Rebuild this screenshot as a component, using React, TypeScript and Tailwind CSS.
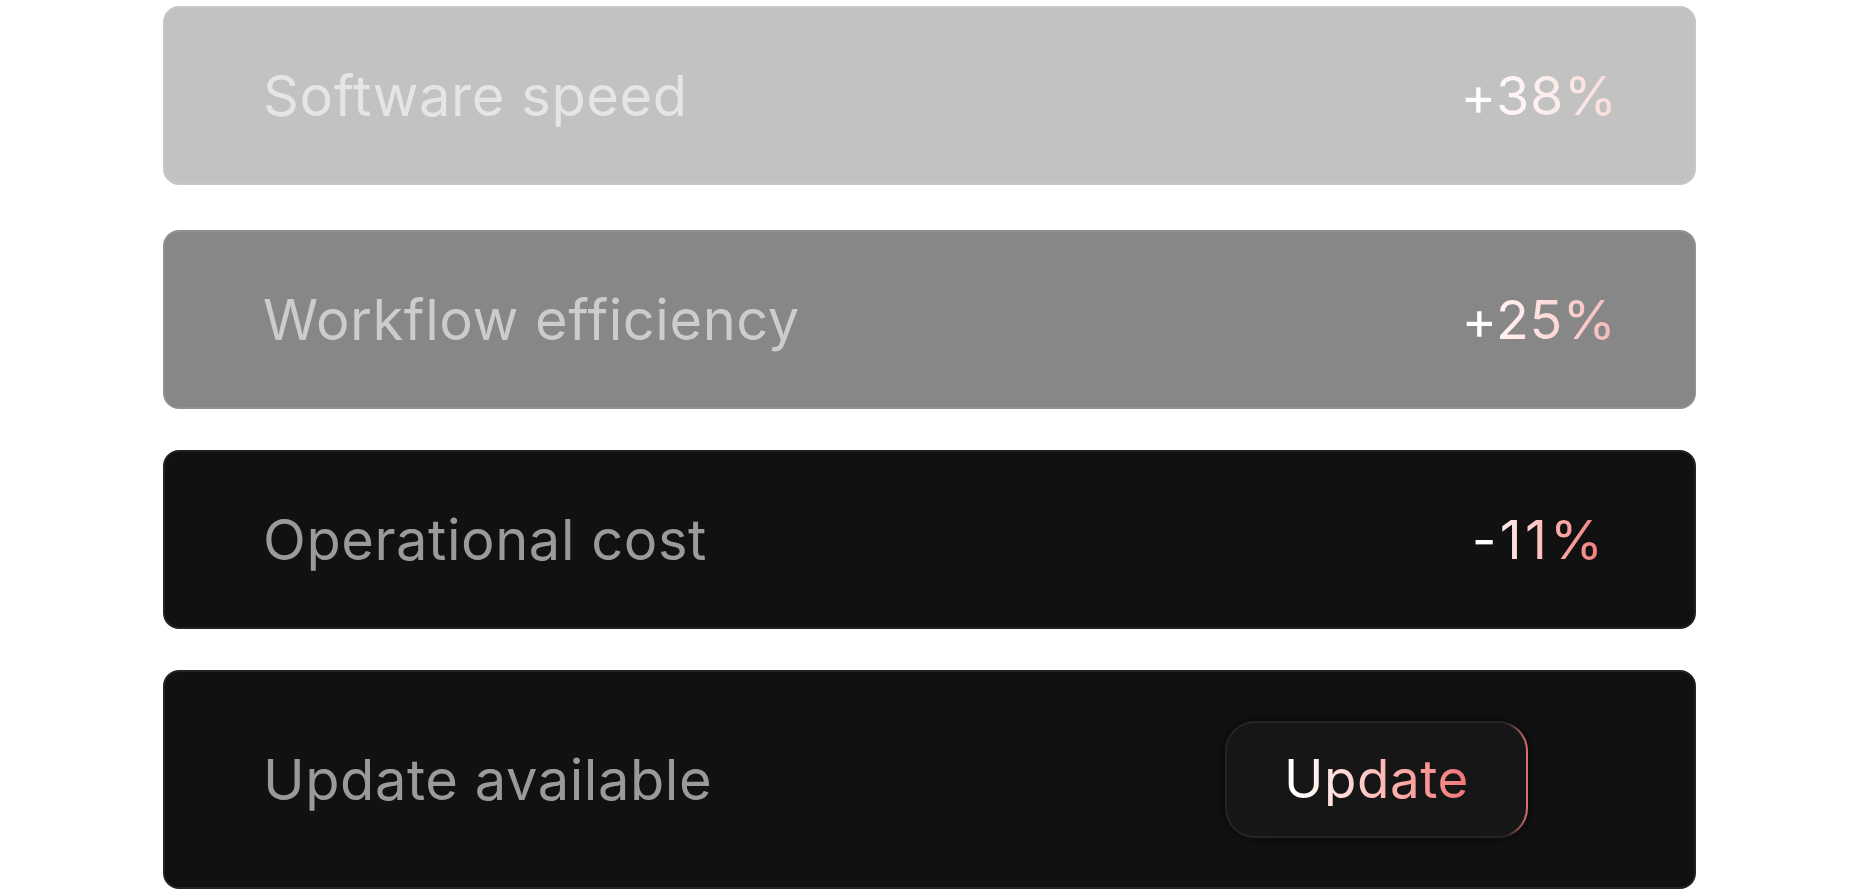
import React from "react";

const font = { fontFamily: "Inter, 'Noto Sans', sans-serif" };

function Value({ text, track }: { text: string; track: string }) {
  return (
    <div className="w-[190px] mr-[60px] text-center">
      <span className={`bg-linear-to-r from-white from-10% to-[#ee7474] bg-clip-text text-transparent text-[54px] leading-none ${track}`}>
        {text}
      </span>
    </div>
  );
}

function Row({ label, value, cls, track }: { label: string; value: string; cls: string; track: string }) {
  return (
    <div
      className={`h-[179px] rounded-[16px] border-2 border-[#232323] bg-[#111111] flex items-center justify-between pl-[98px] ${cls}`}
    >
      <span className="text-[56px] text-[#9a9a9a] tracking-[0.01em] leading-none">{label}</span>
      <Value text={value} track={track} />
    </div>
  );
}

export default function App() {
  return (
    <div className="min-h-screen bg-white pt-[6px]" style={font}>
      <div className="ml-[163px] w-[1533px] flex flex-col">
        <Row label="Software speed" value="+38%" cls="opacity-25" track="tracking-[0.01em]" />
        <Row label="Workflow efficiency" value="+25%" cls="opacity-50 mt-[45px]" track="tracking-[0.01em]" />
        <Row label="Operational cost" value="-11%" cls="mt-[41px]" track="tracking-[0.06em]" />
        <div className="mt-[41px] h-[219px] rounded-[16px] border-2 border-[#232323] bg-[#111111] flex items-center justify-between pl-[98px] pr-[166px]">
          <span className="text-[56px] text-[#9a9a9a] tracking-[0.01em] leading-none">Update available</span>
          <div className="rounded-[30px] p-[2px] bg-linear-to-r from-[#242424] from-93% to-[#e07272] shadow-[0_0_12px_rgba(0,0,0,0.6)]">
            <div className="w-[299px] h-[113px] rounded-[28px] bg-[#161616] flex items-center justify-center">
              <span className="bg-linear-to-r from-white from-5% to-[#ef7474] bg-clip-text text-transparent text-[53px] tracking-[0.01em] leading-none">
                Update
              </span>
            </div>
          </div>
        </div>
      </div>
    </div>
  );
}
